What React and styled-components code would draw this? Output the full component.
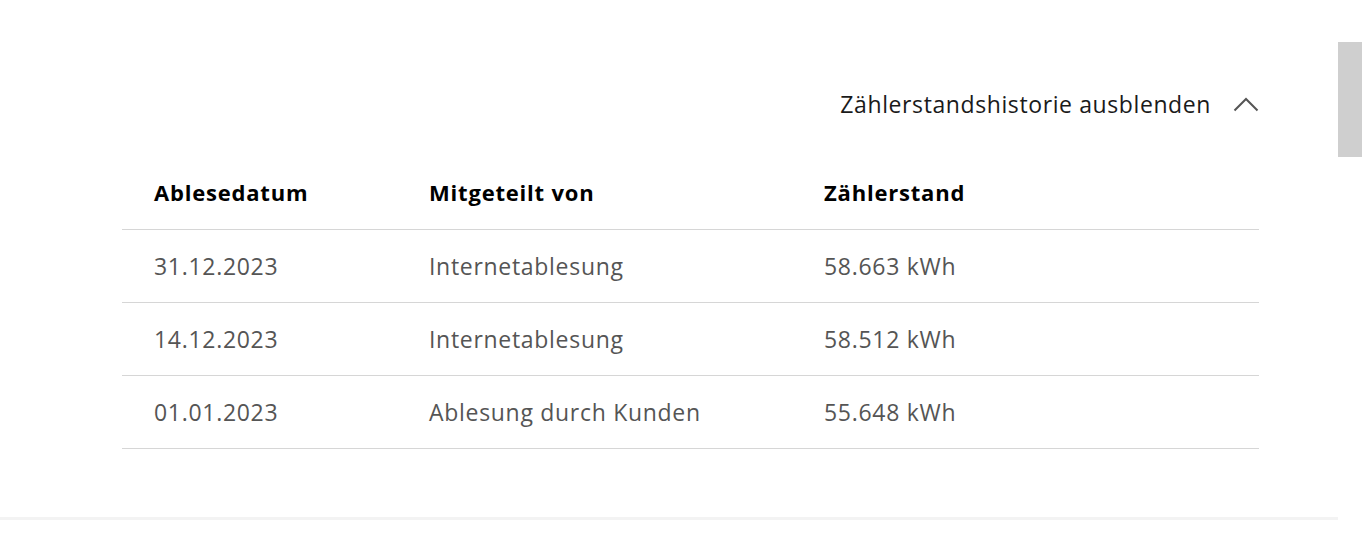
import React from "react";
import styled, { createGlobalStyle } from "styled-components";

const Global = createGlobalStyle`
  html, body { margin: 0; padding: 0; background: #fff; }
  body { font-family: "Open Sans", "Liberation Sans", sans-serif; overflow: hidden; }
`;

const Page = styled.div`
  display: flex;
  width: 1362px;
  height: 548px;
`;

const Main = styled.main`
  flex: 1;
  display: flex;
  flex-direction: column;
`;

const Section = styled.section`
  padding: 0 79px 0 122px;
  height: 517px;
  box-sizing: border-box;
`;

const Divider = styled.div`
  height: 3px;
  background: #f3f3f3;
`;

const ToggleRow = styled.div`
  display: flex;
  justify-content: flex-end;
  padding-top: 86px;
  height: 36px;
`;

const Toggle = styled.button`
  display: flex;
  align-items: center;
  gap: 22px;
  border: 0;
  background: none;
  padding: 0;
  font-family: inherit;
  font-size: 23px;
  letter-spacing: 0.6px;
  color: #1a1a1a;
  cursor: pointer;
`;

const Table = styled.table`
  width: 100%;
  table-layout: fixed;
  border-collapse: collapse;
  margin-top: 34px;
`;

const Th = styled.th`
  box-sizing: border-box;
  text-align: left;
  font-weight: 700;
  font-size: 22px;
  letter-spacing: 0.8px;
  color: #000;
  padding: 0 0 0 32px;
  height: 73px;
  border-bottom: 1px solid #d6d6d6;
  width: ${(p) => p.$w || "auto"};
`;

const Td = styled.td`
  text-align: left;
  font-size: 23px;
  letter-spacing: 0.7px;
  color: #555;
  padding: 0 0 0 32px;
  height: 72px;
  border-bottom: 1px solid #d6d6d6;
`;

const Scrollbar = styled.div`
  width: 24px;
  position: relative;
  background: #fff;
`;

const Thumb = styled.div`
  position: absolute;
  top: 42px;
  left: 0;
  width: 24px;
  height: 115px;
  background: #cfcfcf;
`;

const Chevron = () => (
  <svg width="26" height="16" viewBox="0 0 26 16" fill="none">
    <path d="M1.5 14.5 L13 3 L24.5 14.5" stroke="#555" strokeWidth="2" />
  </svg>
);

const rows = [
  ["31.12.2023", "Internetablesung", "58.663 kWh"],
  ["14.12.2023", "Internetablesung", "58.512 kWh"],
  ["01.01.2023", "Ablesung durch Kunden", "55.648 kWh"],
];

export default function App() {
  return (
    <>
      <Global />
      <Page>
        <Main>
          <Section>
            <ToggleRow>
              <Toggle>
                Zählerstandshistorie ausblenden
                <Chevron />
              </Toggle>
            </ToggleRow>
            <Table>
              <thead>
                <tr>
                  <Th $w="275px">Ablesedatum</Th>
                  <Th $w="395px">Mitgeteilt von</Th>
                  <Th>Zählerstand</Th>
                </tr>
              </thead>
              <tbody>
                {rows.map((r) => (
                  <tr key={r[0]}>
                    {r.map((c, i) => (
                      <Td key={i}>{c}</Td>
                    ))}
                  </tr>
                ))}
              </tbody>
            </Table>
          </Section>
          <Divider />
        </Main>
        <Scrollbar>
          <Thumb />
        </Scrollbar>
      </Page>
    </>
  );
}
